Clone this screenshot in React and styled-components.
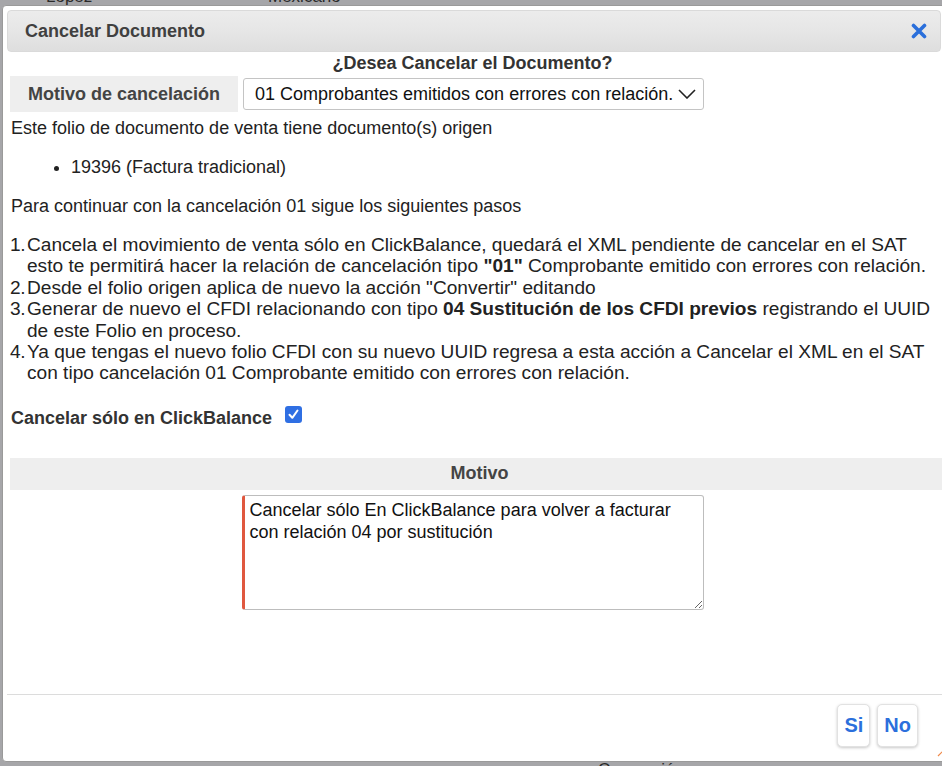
import React from 'react';
import styled, { createGlobalStyle } from 'styled-components';

const GlobalStyle = createGlobalStyle`
  html, body {
    margin: 0;
    padding: 0;
    height: 100%;
  }
  body {
    font-family: "Liberation Sans", Arial, sans-serif;
    overflow: hidden;
  }
`;

// Fondo gris de la página que queda detrás del diálogo
const Backdrop = styled.div`
  position: relative;
  width: 942px;
  height: 766px;
  background: #a6a6a9;
  overflow: hidden;
  display: flex;
  flex-direction: column;
  justify-content: space-between;
`;

const BackdropRow = styled.div`
  display: flex;
  height: 16px;
  margin-top: ${p => (p.$top ? '-11px' : '0')};
  margin-bottom: ${p => (p.$top ? '0' : '-12px')};
  font-size: 17px;
  line-height: 16px;
  color: #2a2a2a;
`;

const BackdropCell = styled.span`
  width: ${p => p.$w}px;
  flex-shrink: 0;
`;

// Ventana del diálogo
const Dialog = styled.div`
  position: absolute;
  top: 5px;
  left: 2px;
  width: 948px;
  height: 757px;
  background: #fff;
  border: 1px solid #9a9a9a;
  border-radius: 4px;
  box-sizing: border-box;
  padding: 4px;
  display: flex;
  flex-direction: column;
`;

const TitleBar = styled.div`
  height: 42px;
  box-sizing: border-box;
  border: 1px solid #dadada;
  border-radius: 4px;
  background: linear-gradient(#ececec 0%, #e6e6e6 50%, #dedede 100%);
  display: flex;
  align-items: center;
  justify-content: space-between;
  padding: 0 13px 0 17px;
  margin-right: 4px;
`;

const Title = styled.span`
  font-size: 18px;
  font-weight: bold;
  color: #404040;
`;

const CloseButton = styled.button`
  border: none;
  background: none;
  padding: 0;
  width: 16px;
  height: 16px;
  cursor: pointer;
  display: flex;
`;

const Body = styled.div`
  flex: 1;
  padding: 0 10px 0 3px;
  color: #222;
  font-size: 18px;
`;

const Question = styled.div`
  text-align: center;
  font-weight: bold;
  font-size: 18px;
  color: #333;
  line-height: 20px;
  margin-top: 1px;
`;

const FieldRow = styled.div`
  display: flex;
  align-items: center;
  gap: 5px;
  margin-top: 3px;
`;

const FieldLabel = styled.div`
  width: 228px;
  height: 36px;
  background: #eeeeee;
  display: flex;
  align-items: center;
  justify-content: center;
  font-weight: bold;
  font-size: 18px;
  color: #444;
`;

const SelectBox = styled.div`
  width: 461px;
  height: 32px;
  box-sizing: border-box;
  border: 1px solid #c4c4c4;
  border-radius: 3px;
  display: flex;
  align-items: center;
  padding: 0 0 0 11px;
  font-size: 18px;
  color: #111;
  white-space: nowrap;
`;

const Chevron = styled.svg`
  margin-left: auto;
  margin-right: 7px;
  flex-shrink: 0;
`;

const Paragraph = styled.p`
  margin: ${p => p.$mt || 0}px 0 0 1px;
  line-height: 20px;
`;

const BulletList = styled.ul`
  margin: 19px 0 0 0;
  padding-left: 61px;
  line-height: 20px;
`;

// Lista numerada de pasos con el número colgado a la izquierda
const Steps = styled.ol`
  margin: 18px 0 0 0;
  padding-left: 17px;
  font-size: 19.1px;
  line-height: 21.4px;
  counter-reset: paso;
`;

const Step = styled.li`
  list-style: none;
  counter-increment: paso;

  &::before {
    content: counter(paso) ".";
    display: inline-block;
    width: 17px;
    margin-left: -17px;
    letter-spacing: -0.5px;
  }
`;

const CheckRow = styled.label`
  display: flex;
  align-items: center;
  gap: 13px;
  margin: 24px 0 0 1px;
  font-weight: bold;
  font-size: 18px;
  color: #333;
`;

const CheckMark = styled.span`
  width: 17px;
  height: 17px;
  border-radius: 3px;
  background: ${p => (p.$checked ? '#2f6fe3' : '#fff')};
  display: flex;
  align-items: center;
  justify-content: center;
  margin-top: -8px;
`;

const SectionHeader = styled.div`
  margin: 29px -14px 0 0;
  height: 32px;
  background: #eeeeee;
  display: flex;
  align-items: center;
  justify-content: center;
  font-weight: bold;
  font-size: 18px;
  color: #444;
`;

const NoteArea = styled.textarea`
  display: block;
  margin: 5px auto 0;
  width: 462px;
  height: 115px;
  box-sizing: border-box;
  border: 1px solid #bdbdbd;
  border-left: 3px solid #e0583f;
  border-radius: 3px;
  padding: 3px 5px;
  font-family: "Liberation Sans", Arial, sans-serif;
  font-size: 18px;
  line-height: 22px;
  color: #111;
  resize: both;
`;

const Footer = styled.div`
  box-sizing: border-box;
  border-top: 1px solid #dcdcdc;
  height: 63px;
  display: flex;
  justify-content: flex-end;
  align-items: flex-start;
  gap: 7px;
  padding: 9px 33px 0 0;
  margin-right: -6px;
`;

const ActionButton = styled.button`
  height: 43px;
  padding: 0 6px;
  background: #fff;
  border: 1px solid #e2e2e2;
  border-radius: 5px;
  box-shadow: 0 1px 3px rgba(0, 0, 0, 0.22);
  font-family: "Liberation Sans", Arial, sans-serif;
  font-weight: bold;
  font-size: 20px;
  color: #2b6fdc;
  cursor: pointer;
`;

const ResizeGrip = styled.svg`
  position: absolute;
  right: -2px;
  bottom: 4px;
`;

const App = () => {
  return (
    <>
      <GlobalStyle />
      <Backdrop>
        <BackdropRow $top>
          <BackdropCell $w={46} />
          <BackdropCell $w={222}>López</BackdropCell>
          <BackdropCell $w={200}>Mexicano</BackdropCell>
        </BackdropRow>
        <BackdropRow>
          <BackdropCell $w={598} />
          <BackdropCell $w={200}>Conversión</BackdropCell>
        </BackdropRow>

        <Dialog>
          <TitleBar>
            <Title>Cancelar Documento</Title>
            <CloseButton aria-label="Cerrar">
              <svg width="16" height="16" viewBox="0 0 16 16">
                <path d="M2.5 2.5 L13.5 13.5 M13.5 2.5 L2.5 13.5" stroke="#2a6fdb" strokeWidth="3.6" strokeLinecap="round" />
              </svg>
            </CloseButton>
          </TitleBar>

          <Body>
            <Question>¿Desea Cancelar el Documento?</Question>
            <FieldRow>
              <FieldLabel>Motivo de cancelación</FieldLabel>
              <SelectBox>
                01 Comprobantes emitidos con errores con relación.
                <Chevron width="18" height="10" viewBox="0 0 18 10">
                  <path d="M1 1 L9 9 L17 1" fill="none" stroke="#222" strokeWidth="1.6" />
                </Chevron>
              </SelectBox>
            </FieldRow>

            <Paragraph $mt={6}>Este folio de documento de venta tiene documento(s) origen</Paragraph>
            <BulletList>
              <li>19396 (Factura tradicional)</li>
            </BulletList>
            <Paragraph $mt={19}>Para continuar con la cancelación 01 sigue los siguientes pasos</Paragraph>

            <Steps>
              <Step>
                Cancela el movimiento de venta sólo en ClickBalance, quedará el XML pendiente de cancelar en el SAT
                esto te permitirá hacer la relación de cancelación tipo <b>"01"</b> Comprobante emitido con errores con relación.
              </Step>
              <Step>Desde el folio origen aplica de nuevo la acción "Convertir" editando</Step>
              <Step>
                Generar de nuevo el CFDI relacionando con tipo <b>04 Sustitución de los CFDI previos</b> registrando el UUID
                de este Folio en proceso.
              </Step>
              <Step>
                Ya que tengas el nuevo folio CFDI con su nuevo UUID regresa a esta acción a Cancelar el XML en el SAT
                con tipo cancelación 01 Comprobante emitido con errores con relación.
              </Step>
            </Steps>

            <CheckRow>
              Cancelar sólo en ClickBalance
              <CheckMark $checked>
                <svg width="11" height="11" viewBox="0 0 11 11">
                  <path d="M1.5 5.8 L4.3 8.8 L9.5 1.5" fill="none" stroke="#fff" strokeWidth="2" strokeLinecap="round" strokeLinejoin="round" />
                </svg>
              </CheckMark>
            </CheckRow>

            <SectionHeader>Motivo</SectionHeader>
            <NoteArea
              defaultValue="Cancelar sólo En ClickBalance para volver a facturar con relación 04 por sustitución"
            />
          </Body>

          <Footer>
            <ActionButton>Si</ActionButton>
            <ActionButton>No</ActionButton>
          </Footer>

          <ResizeGrip width="16" height="16" viewBox="0 0 16 16">
            <path d="M15 3 L3 15 M15 8 L8 15 M15 13 L13 15" stroke="#f08a4b" strokeWidth="1.2" />
          </ResizeGrip>
        </Dialog>
      </Backdrop>
    </>
  );
};

export default App;
